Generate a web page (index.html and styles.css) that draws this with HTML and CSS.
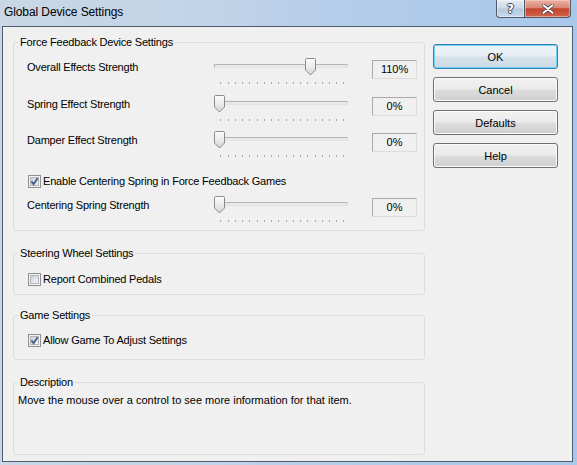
FILE: index.html
```html
<!DOCTYPE html>
<html>
<head>
<meta charset="utf-8">
<link rel="stylesheet" href="styles.css">
</head>
<body>
<svg class="defs" width="0" height="0" aria-hidden="true">
  <defs>
    <linearGradient id="thumbGrad" x1="0" y1="0" x2="0" y2="1">
      <stop offset="0" stop-color="#fbfbfb"/>
      <stop offset="0.5" stop-color="#ececec"/>
      <stop offset="1" stop-color="#d2d2d2"/>
    </linearGradient>
    <linearGradient id="cbGrad" x1="0" y1="0" x2="1" y2="1">
      <stop offset="0" stop-color="#cbcfd5"/>
      <stop offset="1" stop-color="#f7f7f7"/>
    </linearGradient>
  </defs>
</svg>
<div class="window">
  <div class="titlebar">
    <span class="title">Global Device Settings</span>
    <div class="caption">
      <div class="cbtn help"><span class="qmark">?</span></div>
      <div class="cbtn close">
        <svg width="12" height="10" viewBox="0 0 12 10">
          <path d="M1.5 1.2 L10.5 8.8 M10.5 1.2 L1.5 8.8" stroke="#3a3f48" stroke-width="3.6" stroke-linecap="round"/>
          <path d="M1.5 1.2 L10.5 8.8 M10.5 1.2 L1.5 8.8" stroke="#ffffff" stroke-width="2" stroke-linecap="round"/>
        </svg>
      </div>
    </div>
  </div>
  <div class="client">
    <div class="groups">
      <fieldset class="group">
        <legend>Force Feedback Device Settings</legend>
        <div class="group-body ff-body">
          <div class="slider-row row-1">
            <span class="row-label">Overall Effects Strength</span>
            <div class="slider">
              <div class="track"></div>
              <div class="ticks"><i></i><i></i><i></i><i></i><i></i><i></i><i></i><i></i><i></i><i></i><i></i><i></i><i></i><i></i><i></i><i></i><i></i><i></i></div>
              <svg class="thumb" style="left:91px" width="11" height="18" viewBox="0 0 11 18"><path d="M1.5 .5h8a1 1 0 0 1 1 1V12l-5 5-5-5V1.5a1 1 0 0 1 1-1z" fill="url(#thumbGrad)" stroke="#8b8b8b"/></svg>
            </div>
            <span class="value">110%</span>
          </div>
          <div class="slider-row row-2">
            <span class="row-label">Spring Effect Strength</span>
            <div class="slider">
              <div class="track"></div>
              <div class="ticks"><i></i><i></i><i></i><i></i><i></i><i></i><i></i><i></i><i></i><i></i><i></i><i></i><i></i><i></i><i></i><i></i><i></i><i></i></div>
              <svg class="thumb" style="left:0px" width="11" height="18" viewBox="0 0 11 18"><path d="M1.5 .5h8a1 1 0 0 1 1 1V12l-5 5-5-5V1.5a1 1 0 0 1 1-1z" fill="url(#thumbGrad)" stroke="#8b8b8b"/></svg>
            </div>
            <span class="value">0%</span>
          </div>
          <div class="slider-row row-3">
            <span class="row-label">Damper Effect Strength</span>
            <div class="slider">
              <div class="track"></div>
              <div class="ticks"><i></i><i></i><i></i><i></i><i></i><i></i><i></i><i></i><i></i><i></i><i></i><i></i><i></i><i></i><i></i><i></i><i></i><i></i></div>
              <svg class="thumb" style="left:0px" width="11" height="18" viewBox="0 0 11 18"><path d="M1.5 .5h8a1 1 0 0 1 1 1V12l-5 5-5-5V1.5a1 1 0 0 1 1-1z" fill="url(#thumbGrad)" stroke="#8b8b8b"/></svg>
            </div>
            <span class="value">0%</span>
          </div>
          <label class="check-row cb-centering">
            <svg class="cb" width="13" height="13" viewBox="0 0 13 13"><rect x=".5" y=".5" width="12" height="12" fill="#f4f4f4" stroke="#8e8f8f"/><rect x="2.5" y="2.5" width="8" height="8" fill="url(#cbGrad)" stroke="#b1b5bb"/><path d="M3.4 6.4 L5.6 9.2 L9.6 3.2" fill="none" stroke="#4a5d8c" stroke-width="1.9"/></svg>
            <span>Enable Centering Spring in Force Feedback Games</span>
          </label>
          <div class="slider-row row-4">
            <span class="row-label">Centering Spring Strength</span>
            <div class="slider">
              <div class="track"></div>
              <div class="ticks"><i></i><i></i><i></i><i></i><i></i><i></i><i></i><i></i><i></i><i></i><i></i><i></i><i></i><i></i><i></i><i></i><i></i><i></i></div>
              <svg class="thumb" style="left:0px" width="11" height="18" viewBox="0 0 11 18"><path d="M1.5 .5h8a1 1 0 0 1 1 1V12l-5 5-5-5V1.5a1 1 0 0 1 1-1z" fill="url(#thumbGrad)" stroke="#8b8b8b"/></svg>
            </div>
            <span class="value">0%</span>
          </div>
        </div>
      </fieldset>

      <fieldset class="group group-steer">
        <legend>Steering Wheel Settings</legend>
        <div class="group-body steer-body">
          <label class="check-row">
            <svg class="cb" width="13" height="13" viewBox="0 0 13 13"><rect x=".5" y=".5" width="12" height="12" fill="#f4f4f4" stroke="#8e8f8f"/><rect x="2.5" y="2.5" width="8" height="8" fill="url(#cbGrad)" stroke="#b1b5bb"/></svg>
            <span>Report Combined Pedals</span>
          </label>
        </div>
      </fieldset>

      <fieldset class="group group-game">
        <legend>Game Settings</legend>
        <div class="group-body game-body">
          <label class="check-row">
            <svg class="cb" width="13" height="13" viewBox="0 0 13 13"><rect x=".5" y=".5" width="12" height="12" fill="#f4f4f4" stroke="#8e8f8f"/><rect x="2.5" y="2.5" width="8" height="8" fill="url(#cbGrad)" stroke="#b1b5bb"/><path d="M3.4 6.4 L5.6 9.2 L9.6 3.2" fill="none" stroke="#4a5d8c" stroke-width="1.9"/></svg>
            <span>Allow Game To Adjust Settings</span>
          </label>
        </div>
      </fieldset>

      <fieldset class="group group-desc">
        <legend>Description</legend>
        <div class="group-body desc-body">
          <p class="desc">Move the mouse over a control to see more information for that item.</p>
        </div>
      </fieldset>
    </div>

    <div class="buttons">
      <button class="btn btn-default">OK</button>
      <button class="btn">Cancel</button>
      <button class="btn">Defaults</button>
      <button class="btn">Help</button>
    </div>
  </div>
</div>
</body>
</html>
```

FILE: styles.css
```css
html, body {
  margin: 0;
  padding: 0;
}

body {
  width: 577px;
  height: 465px;
  overflow: hidden;
  font-family: "Liberation Sans", Arial, sans-serif;
  font-size: 11px;
  color: #000;
  background:
    linear-gradient(90deg, #c9d7e6 0%, #c2d4e8 35%, #b4cde9 60%, #a8c8ea 100%);
}

.defs {
  position: absolute;
  width: 0;
  height: 0;
}

.window {
  display: flex;
  flex-direction: column;
  height: 465px;
}

/* ---------- title bar ---------- */
.titlebar {
  height: 26px;
  flex: none;
  display: flex;
  justify-content: space-between;
  align-items: flex-start;
  padding: 0 6px 0 4px;
  box-sizing: border-box;
}

.title {
  font-size: 12px;
  line-height: 15px;
  padding-top: 5px;
  color: #000;
  letter-spacing: -0.1px;
}

.caption {
  display: flex;
}

.cbtn {
  height: 18px;
  box-sizing: border-box;
  border: 1px solid #4e5a6a;
  border-top: none;
  display: flex;
  align-items: center;
  justify-content: center;
}

.help {
  width: 28px;
  border-right: none;
  border-bottom-left-radius: 4px;
  background: linear-gradient(#e3eaf2 0%, #ccd9e7 48%, #b5c8dc 52%, #c8d8ea 100%);
  box-shadow: inset 0 0 0 1px rgba(255, 255, 255, 0.45);
}

.qmark {
  font-family: "DejaVu Sans", sans-serif;
  font-weight: bold;
  font-size: 12px;
  line-height: 14px;
  color: #fff;
  text-shadow: 1px 0 0 #3d4552, -1px 0 0 #3d4552, 0 1px 0 #3d4552, 0 -1px 0 #3d4552;
}

.close {
  width: 47px;
  border-bottom-right-radius: 4px;
  background: linear-gradient(#eab0a2 0%, #d98a77 45%, #c5442c 52%, #d0664c 100%);
  box-shadow: inset 0 0 0 1px rgba(255, 220, 210, 0.5);
}

/* ---------- client ---------- */
.client {
  margin: 0 4px 3px 2px;
  height: 436px;
  box-sizing: border-box;
  border: 1px solid #4f5c6c;
  background: #f0f0f0;
  display: flex;
  align-items: flex-start;
  gap: 8px;
  padding: 9px 14px 0 10px;
}

.groups {
  width: 412px;
  display: flex;
  flex-direction: column;
  gap: 16px;
}

.group {
  margin: 0;
  padding: 0;
  min-width: 0;
  border: 1px solid #d5dfe5;
  border-radius: 3px;
}

.group legend {
  margin-left: 4px;
  padding: 0 2px;
  line-height: 13px;
  font-size: 11px;
  letter-spacing: -0.2px;
}

.group-game {
  margin-top: -2px;
}

.group-body {
  display: flex;
  flex-direction: column;
}

.ff-body {
  padding: 9px 7px 8px 13px;
}

.steer-body {
  padding: 13px 7px 8px 13px;
}

.game-body {
  padding: 12px 7px 12px 13px;
}

.desc-body {
  padding: 5px 4px 0 4px;
  height: 60px;
}

.desc {
  margin: 0;
  line-height: 13px;
}

/* ---------- slider rows ---------- */
.slider-row {
  display: flex;
  align-items: flex-start;
  height: 26px;
}

.row-2 { margin-top: 11px; }
.row-3 { margin-top: 10px; }
.row-4 { margin-top: 8px; }

.row-label {
  width: 188px;
  margin-top: 3px;
  line-height: 13px;
  letter-spacing: -0.2px;
}

.slider {
  position: relative;
  width: 134px;
  height: 26px;
}

.track {
  margin-top: 6px;
  height: 4px;
  box-sizing: border-box;
  border: 1px solid #b4b4b4;
  border-bottom-color: #e3e3e3;
  border-right-color: #d8d8d8;
  background: #e7eaea;
  border-radius: 1px;
}

.ticks {
  margin: 14px 0 0 6px;
  width: 124px;
  height: 2px;
  display: flex;
  justify-content: space-between;
}

.ticks i {
  width: 1px;
  height: 2px;
  background: #a8a8a8;
}

.thumb {
  position: absolute;
  top: 0;
  display: block;
}

.value {
  margin: 2px 0 0 24px;
  width: 45px;
  height: 19px;
  box-sizing: border-box;
  border: 1px solid #a9a9a9;
  border-right-color: #dcdcdc;
  border-bottom-color: #dcdcdc;
  text-align: center;
  line-height: 17px;
}

/* ---------- checkboxes ---------- */
.check-row {
  display: flex;
  align-items: center;
  height: 13px;
  padding-left: 1px;
  gap: 2px;
  line-height: 13px;
  letter-spacing: -0.2px;
}

.cb {
  display: block;
  flex: none;
}

.cb-centering {
  margin-top: 18px;
}

/* ---------- buttons ---------- */
.buttons {
  margin-top: 8px;
  display: flex;
  flex-direction: column;
  gap: 8px;
}

.btn {
  width: 125px;
  height: 25px;
  box-sizing: border-box;
  margin: 0;
  padding: 0;
  border: 1px solid #707070;
  border-radius: 3px;
  background: linear-gradient(#f2f2f2 0%, #ebebeb 48%, #dddddd 52%, #cfcfcf 100%);
  box-shadow: inset 0 0 0 1px #fbfbfb;
  font-family: "Liberation Sans", Arial, sans-serif;
  font-size: 11px;
  color: #000;
  text-align: center;
}

.btn-default {
  border-color: #3c7fb1;
  background: linear-gradient(#eef4f8 0%, #e6eef4 48%, #d6e2ea 52%, #cbdae5 100%);
  box-shadow: inset 0 0 0 1px #6fd2f7;
}
```
